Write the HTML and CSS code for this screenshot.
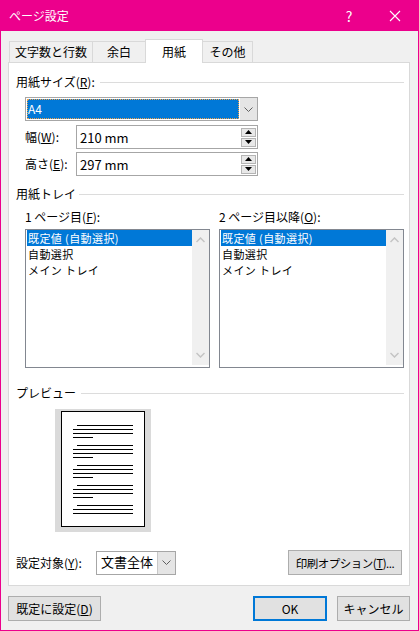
FILE: index.html
```html
<!DOCTYPE html>
<html lang="ja">
<head>
<meta charset="utf-8">
<title>ページ設定</title>
<link rel="stylesheet" href="styles.css">
</head>
<body>
<div class="window">
  <div class="titlebar">
    <span class="title">ページ設定</span>
    <span class="tb-btn">?</span>
    <span class="tb-btn">
      <svg width="12" height="12" viewBox="0 0 12 12"><path d="M1 1L11 11M11 1L1 11" stroke="#fff" stroke-width="1.1" fill="none"/></svg>
    </span>
  </div>
  <div class="content">
    <div class="tabs">
      <div class="tab tab-1">文字数と行数</div>
      <div class="tab tab-2">余白</div>
      <div class="tab tab-3 active">用紙</div>
      <div class="tab tab-4">その他</div>
    </div>
    <div class="panel">
      <div class="head head-size"><span>用紙サイズ(<u>R</u>):</span><i class="rule"></i></div>
      <div class="combo combo-a4">
        <div class="combo-value selected">A4</div>
        <div class="combo-btn"><svg width="9" height="5" viewBox="0 0 9 5"><path d="M0.5 0.5L4.5 4.5L8.5 0.5" stroke="#606060" fill="none"/></svg></div>
      </div>
      <div class="frow frow-1">
        <label>幅(<u>W</u>):</label>
        <div class="spinbox"><span class="spin-text">210 mm</span>
          <div class="spin-btns">
            <div class="spin-b"><svg width="7" height="4" viewBox="0 0 7 4"><path d="M3.5 0L7 4H0Z" fill="#000"/></svg></div>
            <div class="spin-b"><svg width="7" height="4" viewBox="0 0 7 4"><path d="M0 0H7L3.5 4Z" fill="#000"/></svg></div>
          </div>
        </div>
      </div>
      <div class="frow frow-2">
        <label>高さ(<u>E</u>):</label>
        <div class="spinbox"><span class="spin-text">297 mm</span>
          <div class="spin-btns">
            <div class="spin-b"><svg width="7" height="4" viewBox="0 0 7 4"><path d="M3.5 0L7 4H0Z" fill="#000"/></svg></div>
            <div class="spin-b"><svg width="7" height="4" viewBox="0 0 7 4"><path d="M0 0H7L3.5 4Z" fill="#000"/></svg></div>
          </div>
        </div>
      </div>

      <div class="head head-tray"><span>用紙トレイ</span><i class="rule"></i></div>
      <div class="trays">
        <div class="tray">
          <div class="tray-label">1 ページ目(<u>F</u>):</div>
          <div class="list">
            <div class="items">
              <div class="item selected">既定値 (自動選択)</div>
              <div class="item">自動選択</div>
              <div class="item">メイン トレイ</div>
            </div>
            <div class="scroll">
              <svg width="9" height="6" viewBox="0 0 9 6"><path d="M0.5 5L4.5 1L8.5 5" stroke="#c4c4c4" stroke-width="1.5" fill="none"/></svg>
              <svg width="9" height="6" viewBox="0 0 9 6"><path d="M0.5 1L4.5 5L8.5 1" stroke="#c4c4c4" stroke-width="1.5" fill="none"/></svg>
            </div>
          </div>
        </div>
        <div class="tray">
          <div class="tray-label">2 ページ目以降(<u>O</u>):</div>
          <div class="list">
            <div class="items">
              <div class="item selected">既定値 (自動選択)</div>
              <div class="item">自動選択</div>
              <div class="item">メイン トレイ</div>
            </div>
            <div class="scroll">
              <svg width="9" height="6" viewBox="0 0 9 6"><path d="M0.5 5L4.5 1L8.5 5" stroke="#c4c4c4" stroke-width="1.5" fill="none"/></svg>
              <svg width="9" height="6" viewBox="0 0 9 6"><path d="M0.5 1L4.5 5L8.5 1" stroke="#c4c4c4" stroke-width="1.5" fill="none"/></svg>
            </div>
          </div>
        </div>
      </div>

      <div class="head head-preview"><span>プレビュー</span><i class="rule"></i></div>
      <svg class="preview" width="96" height="123" viewBox="0 0 96 123">
        <rect x="0" y="0" width="96" height="123" fill="#dadada"/>
        <rect x="6.5" y="2.5" width="83" height="115" fill="#fff" stroke="#000"/>
        <g fill="#000">
          <rect x="22" y="16" width="56" height="1"/><rect x="18" y="20" width="60" height="1"/><rect x="18" y="24" width="60" height="1"/><rect x="18" y="28" width="20" height="1"/>
          <rect x="22" y="36" width="56" height="1"/><rect x="18" y="40" width="60" height="1"/><rect x="18" y="44" width="60" height="1"/><rect x="18" y="48" width="20" height="1"/>
          <rect x="22" y="56" width="56" height="1"/><rect x="18" y="60" width="60" height="1"/><rect x="18" y="64" width="60" height="1"/><rect x="18" y="68" width="20" height="1"/>
          <rect x="22" y="76" width="56" height="1"/><rect x="18" y="80" width="60" height="1"/><rect x="18" y="84" width="60" height="1"/><rect x="18" y="88" width="20" height="1"/>
          <rect x="22" y="96" width="56" height="1"/><rect x="18" y="100" width="60" height="1"/><rect x="18" y="104" width="60" height="1"/>
        </g>
      </svg>

      <div class="apply-row">
        <label class="apply-label">設定対象(<u>Y</u>):</label>
        <div class="combo combo-apply">
          <div class="combo-value">文書全体</div>
          <div class="combo-btn"><svg width="9" height="5" viewBox="0 0 9 5"><path d="M0.5 0.5L4.5 4.5L8.5 0.5" stroke="#606060" fill="none"/></svg></div>
        </div>
        <div class="btn btn-print">印刷オプション(<u>T</u>)...</div>
      </div>
    </div>
    <div class="footer">
      <div class="btn btn-default">既定に設定(<u>D</u>)</div>
      <div class="btn btn-ok">OK</div>
      <div class="btn btn-cancel">キャンセル</div>
    </div>
  </div>
</div>
</body>
</html>
```
FILE: styles.css
```css
body {
  margin: 0;
  font-family: "Noto Sans CJK JP", "Noto Sans", sans-serif;
  font-size: 12px;
  color: #000;
}
u { text-decoration: underline; text-underline-offset: 1px; }

.window {
  width: 419px;
  height: 631px;
  box-sizing: border-box;
  border: 1px solid #ec008c;
  border-top: 0;
  background: #f0f0f0;
  display: flex;
  flex-direction: column;
}

.titlebar {
  height: 31px;
  background: #ec008c;
  color: #fff;
  display: flex;
  align-items: center;
  padding-left: 8px;
}
.title { flex: 1; line-height: 16px; }
.tb-btn {
  width: 46px;
  height: 31px;
  display: flex;
  align-items: center;
  justify-content: center;
  font-size: 14px;
}

.content {
  flex: 1;
  display: flex;
  flex-direction: column;
  padding: 0 8px 0 7px;
}

.tabs {
  display: flex;
  align-items: flex-end;
  height: 23px;
  margin-top: 8px;
  padding-left: 1px;
  position: relative;
  z-index: 1;
}
.tab {
  box-sizing: border-box;
  height: 21px;
  border: 1px solid #d9d9d9;
  border-bottom: 0;
  background: #f0f0f0;
  display: flex;
  align-items: center;
  justify-content: center;
  line-height: 16px;
}
.tab-1 { width: 84px; }
.tab-2 { width: 54px; margin-left: -1px; }
.tab-3 { width: 58px; margin-left: -1px; }
.tab-4 { width: 51px; margin-left: -1px; }
.tab.active {
  height: 24px;
  background: #fff;
  margin-bottom: -1px;
  position: relative;
  z-index: 2;
}

.panel {
  box-sizing: border-box;
  height: 524px;
  background: #fff;
  border: 1px solid #d9d9d9;
  padding: 0 5px 0 7px;
}

.head {
  display: flex;
  align-items: center;
  height: 16px;
  line-height: 16px;
}
.head .rule {
  flex: 1;
  height: 1px;
  background: #dcdcdc;
  margin-left: 5px;
}
.head-size { margin-top: 11px; }
.head-tray { margin-top: 10px; }
.head-tray .rule { margin-left: 3px; }
.head-preview { margin-top: 17px; }

.combo {
  box-sizing: border-box;
  border: 1px solid #a6a6a6;
  display: flex;
  background: #fff;
}
.combo-value {
  flex: 1;
  line-height: 20px;
  padding-left: 1px;
}
.combo-btn {
  width: 17px;
  background: #e5e5e5;
  display: flex;
  align-items: center;
  justify-content: center;
}
.combo-a4 {
  margin: 7px 0 0 9px;
  width: 233px;
  height: 24px;
}
.combo-a4 .combo-value {
  margin: 1px;
  background: #0078d7;
  color: #fff;
  outline: 1px dotted #f0a24a;
  outline-offset: -1px;
}

.frow {
  display: flex;
  align-items: center;
  height: 24px;
  margin-left: 9px;
}
.frow-1 { margin-top: 4px; }
.frow-2 { margin-top: 3px; }
.frow label { width: 51px; line-height: 16px; }
.spinbox {
  box-sizing: border-box;
  width: 182px;
  height: 24px;
  border: 1px solid #a6a6a6;
  display: flex;
  align-items: center;
  padding: 0 1px 0 3px;
}
.spin-text { flex: 1; font-size: 13px; }
.spin-btns {
  display: flex;
  flex-direction: column;
  gap: 1px;
  width: 15px;
}
.spin-b {
  box-sizing: border-box;
  height: 9px;
  border: 1px solid #b4b4b4;
  background: #e8e8e8;
  display: flex;
  align-items: center;
  justify-content: center;
}

.trays {
  display: flex;
  gap: 9px;
  margin-left: 9px;
}
.tray { width: 185px; }
.tray-label {
  margin-top: 7px;
  height: 16px;
  line-height: 16px;
}
.list {
  box-sizing: border-box;
  margin-top: 4px;
  height: 139px;
  border: 1px solid #828790;
  display: flex;
}
.items { flex: 1; padding-left: 1px; }
.item {
  font-size: 11px;
  letter-spacing: 0.4px;
  line-height: 16px;
  height: 16px;
  padding-left: 1px;
  white-space: nowrap;
}
.item.selected { background: #0078d7; color: #fff; }
.scroll {
  width: 17px;
  margin-bottom: 2px;
  background: #f0f0f0;
  display: flex;
  flex-direction: column;
  align-items: center;
  justify-content: space-between;
  padding: 7px 0 7px;
  box-sizing: border-box;
}

.preview {
  display: block;
  margin: 8px 0 0 39px;
}

.apply-row {
  display: flex;
  align-items: center;
  height: 25px;
  margin-top: 18px;
}
.apply-label { width: 80px; line-height: 16px; }
.combo-apply { width: 80px; height: 24px; }
.combo-apply .combo-value { padding-left: 4px; font-size: 13px; }
.combo-apply .combo-btn { border-left: 1px solid #c8c8c8; }

.btn {
  box-sizing: border-box;
  height: 25px;
  border: 1px solid #adadad;
  background: #e1e1e1;
  display: flex;
  align-items: center;
  justify-content: center;
  line-height: 16px;
  white-space: nowrap;
}
.btn-print { width: 114px; margin-left: auto; margin-right: 2px; font-size: 11.5px; letter-spacing: -0.5px; }

.footer {
  display: flex;
  margin-top: 10px;
}
.btn-default { width: 93px; }
.btn-ok { width: 74px; margin-left: auto; border: 2px solid #0078d7; }
.btn-cancel { width: 73px; margin-left: 10px; }
```
